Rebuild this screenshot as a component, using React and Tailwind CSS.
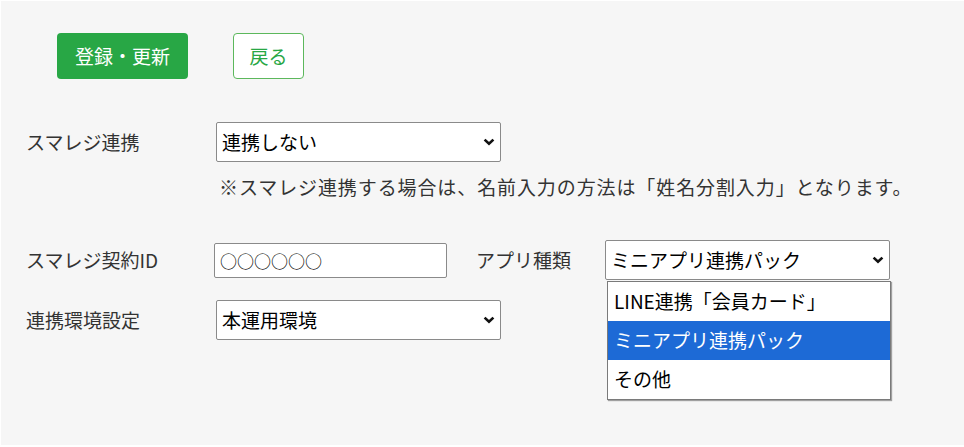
import React, { useState } from 'react';

const font = { fontFamily: '"Noto Sans CJK JP", "Noto Sans", sans-serif' };

const Chevron = () => (
    <svg className="absolute right-[6px] top-1/2 -translate-y-1/2 pointer-events-none" width="12" height="8" viewBox="0 0 12 8">
        <path d="M1.6 1.6 L6 5.8 L10.4 1.6" fill="none" stroke="#111" strokeWidth="2.6" />
    </svg>
);

const Select = ({ value, options, className = '', children }) => (
    <div className={`relative w-[285px] h-[40px] ${className}`}>
        <select
            defaultValue={value}
            className="appearance-none w-full h-full bg-white border border-[#8a8a8a] rounded-[2px] pl-[5px] pr-6 text-[19px] text-black outline-none"
            style={font}
        >
            {options.map((o) => (
                <option key={o}>{o}</option>
            ))}
        </select>
        <Chevron />
        {children}
    </div>
);

const appTypes = ['LINE連携「会員カード」', 'ミニアプリ連携パック', 'その他'];

export default function App() {
    const [appType] = useState('ミニアプリ連携パック');

    return (
        <div
            className="w-full h-screen bg-[#f6f6f6] border-l border-t border-b-2 border-white text-[19px] text-[#333] overflow-hidden"
            style={font}
        >
            {/* buttons */}
            <div className="flex items-center gap-[45px] pl-[56px] pt-[32px]">
                <button className="h-[46px] w-[131px] rounded-[4px] bg-[#28a745] text-white text-[19px]">
                    登録・更新
                </button>
                <button className="h-[46px] w-[71px] rounded-[4px] bg-white border border-[#5cb85c] text-[#28a745] text-[19px]">
                    戻る
                </button>
            </div>

            <div className="pl-[25px] mt-[43px]">
                {/* smaregi link */}
                <div className="flex items-center">
                    <span className="w-[190px]">スマレジ連携</span>
                    <Select value="連携しない" options={['連携しない', '連携する']} />
                </div>
                <p className="ml-[193px] mt-[11px] leading-[28px] tracking-[0.9px]">
                    ※スマレジ連携する場合は、名前入力の方法は「姓名分割入力」となります。
                </p>

                {/* contract id + app type */}
                <div className="flex items-center mt-[39px]">
                    <span className="w-[188px]">スマレジ契約ID</span>
                    <input
                        defaultValue="○○○○○○"
                        className="w-[233px] h-[35px] bg-white border border-[#8a8a8a] rounded-[2px] px-[5px] text-[17px] text-black outline-none"
                        style={font}
                    />
                    <span className="ml-[29px] w-[129px]">アプリ種類</span>
                    <Select value={appType} options={appTypes}>
                        {/* open dropdown list */}
                        <ul className="absolute left-[2px] top-[41px] w-[284px] bg-white border border-[#7a7a7a] shadow-[1px_1px_1px_rgba(0,0,0,0.35)] z-10 text-black">
                            {appTypes.map((o) => (
                                <li
                                    key={o}
                                    className={`h-[39px] flex items-center pl-[6px] ${o === appType ? 'bg-[#1d6ad6] text-white' : ''}`}
                                >
                                    {o}
                                </li>
                            ))}
                        </ul>
                    </Select>
                </div>

                {/* environment */}
                <div className="flex items-center mt-[20px]">
                    <span className="w-[190px]">連携環境設定</span>
                    <Select value="本運用環境" options={['本運用環境', 'テスト環境']} />
                </div>
            </div>
        </div>
    );
}
